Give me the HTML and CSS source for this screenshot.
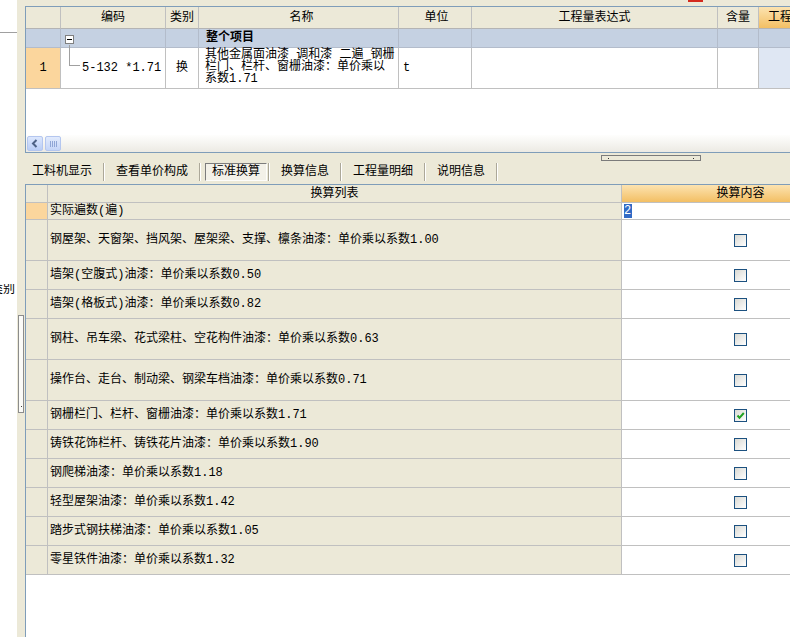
FILE: index.html
```html
<!DOCTYPE html>
<html lang="zh-CN">
<head>
<meta charset="utf-8">
<title>标准换算</title>
<link rel="stylesheet" href="styles.css">
</head>
<body>
<div class="app">
  <aside class="side">
    <div class="side-top"></div>
    <div class="side-label"><span>类别</span></div>
  </aside>
  <div class="splitter">
    <div class="vthumb"><i></i></div>
  </div>
  <main class="main">
    <div class="topstrip"><span class="redmark"></span></div>

    <section class="grid-top">
      <div class="row hdr">
        <div class="c c-num"></div>
        <div class="c c-code">编码</div>
        <div class="c c-type">类别</div>
        <div class="c c-name">名称</div>
        <div class="c c-unit">单位</div>
        <div class="c c-expr">工程量表达式</div>
        <div class="c c-qty">含量</div>
        <div class="c c-eng orange">工程量</div>
      </div>
      <div class="row group">
        <div class="c c-num"></div>
        <div class="c c-code"><span class="minus"><i></i></span></div>
        <div class="c c-type"></div>
        <div class="c c-name bold">整个项目</div>
        <div class="c c-unit"></div>
        <div class="c c-expr"></div>
        <div class="c c-qty"></div>
        <div class="c c-eng"></div>
      </div>
      <div class="row item">
        <div class="c c-num rn">1</div>
        <div class="c c-code"><span class="tree"></span><span class="code-text">5-132 *1.71</span></div>
        <div class="c c-type">换</div>
        <div class="c c-name wrap">其他金属面油漆 调和漆 二遍 钢栅<br>栏门、栏杆、窗栅油漆：单价乘以<br>系数1.71</div>
        <div class="c c-unit unit">t</div>
        <div class="c c-expr"></div>
        <div class="c c-qty"></div>
        <div class="c c-eng lightblue"></div>
      </div>
      <div class="blank"></div>
      <div class="hscroll">
        <span class="sb-btn"><svg width="14" height="13" viewBox="0 0 14 13"><path d="M8.5 3 L5 6.5 L8.5 10" fill="none" stroke="#4d6185" stroke-width="2"/></svg></span>
        <span class="sb-thumb"><i></i><i></i><i></i><i></i></span>
      </div>
    </section>

    <div class="tabarea">
      <div class="grip"><i></i><i></i></div>
      <nav class="tabbar">
        <span class="tab first">工料机显示</span><span class="sep"></span>
        <span class="tab">查看单价构成</span><span class="sep"></span>
        <span class="tab sel">标准换算</span><span class="sep"></span>
        <span class="tab">换算信息</span><span class="sep"></span>
        <span class="tab">工程量明细</span><span class="sep"></span>
        <span class="tab">说明信息</span><span class="sep"></span>
      </nav>
    </div>

    <section class="grid-bottom">
      <div class="row bhdr">
        <div class="c b-num"></div>
        <div class="c b-list">换算列表</div>
        <div class="c b-val orange">换算内容</div>
      </div>
      <div class="row r17">
        <div class="c b-num rn"></div>
        <div class="c b-list">实际遍数(遍)</div>
        <div class="c b-val left"><span class="selval">2</span></div>
      </div>
      <div class="row r41">
        <div class="c b-num"></div>
        <div class="c b-list">钢屋架、天窗架、挡风架、屋架梁、支撑、檩条油漆：单价乘以系数1.00</div>
        <div class="c b-val"><span class="cb"></span></div>
      </div>
      <div class="row r29">
        <div class="c b-num"></div>
        <div class="c b-list">墙架(空腹式)油漆：单价乘以系数0.50</div>
        <div class="c b-val"><span class="cb"></span></div>
      </div>
      <div class="row r29">
        <div class="c b-num"></div>
        <div class="c b-list">墙架(格板式)油漆：单价乘以系数0.82</div>
        <div class="c b-val"><span class="cb"></span></div>
      </div>
      <div class="row r41">
        <div class="c b-num"></div>
        <div class="c b-list">钢柱、吊车梁、花式梁柱、空花构件油漆：单价乘以系数0.63</div>
        <div class="c b-val"><span class="cb"></span></div>
      </div>
      <div class="row r41">
        <div class="c b-num"></div>
        <div class="c b-list">操作台、走台、制动梁、钢梁车档油漆：单价乘以系数0.71</div>
        <div class="c b-val"><span class="cb"></span></div>
      </div>
      <div class="row r29">
        <div class="c b-num"></div>
        <div class="c b-list">钢栅栏门、栏杆、窗栅油漆：单价乘以系数1.71</div>
        <div class="c b-val"><span class="cb"><svg width="11" height="11" viewBox="0 0 11 11"><path d="M2.5 5.5 L4.5 7.8 L8.8 3" fill="none" stroke="#21a121" stroke-width="2"/></svg></span></div>
      </div>
      <div class="row r29">
        <div class="c b-num"></div>
        <div class="c b-list">铸铁花饰栏杆、铸铁花片油漆：单价乘以系数1.90</div>
        <div class="c b-val"><span class="cb"></span></div>
      </div>
      <div class="row r29">
        <div class="c b-num"></div>
        <div class="c b-list">钢爬梯油漆：单价乘以系数1.18</div>
        <div class="c b-val"><span class="cb"></span></div>
      </div>
      <div class="row r29">
        <div class="c b-num"></div>
        <div class="c b-list">轻型屋架油漆：单价乘以系数1.42</div>
        <div class="c b-val"><span class="cb"></span></div>
      </div>
      <div class="row r29">
        <div class="c b-num"></div>
        <div class="c b-list">踏步式钢扶梯油漆：单价乘以系数1.05</div>
        <div class="c b-val"><span class="cb"></span></div>
      </div>
      <div class="row r29">
        <div class="c b-num"></div>
        <div class="c b-list">零星铁件油漆：单价乘以系数1.32</div>
        <div class="c b-val"><span class="cb"></span></div>
      </div>
    </section>
  </main>
</div>
</body>
</html>
```

FILE: styles.css
```css
* { box-sizing: border-box; margin: 0; padding: 0; }
html, body { width: 790px; height: 637px; overflow: hidden; background: #fff; }
body {
  font-family: "Liberation Mono", "Noto Sans CJK SC", monospace;
  font-size: 12px;
  line-height: 14px;
  color: #000;
}

.app { display: flex; width: 790px; height: 637px; }

/* left strip */
.side { width: 17px; flex: none; background: #fff; display: flex; flex-direction: column; }
.side-top { height: 33px; border-bottom: 1px solid #a0a0a0; }
.side-label {
  margin-top: 251px; height: 12px; line-height: 12px;
  display: flex; justify-content: flex-end; overflow: hidden;
  white-space: nowrap; padding-right: 2px;
}

.splitter { width: 8px; flex: none; background: #ece9d8; padding-top: 315px; }
.vthumb {
  width: 6px; height: 98px; margin-left: 1px;
  border: 1px solid #8c8c8c; background: #fbfbf8;
  display: flex; flex-direction: column; justify-content: flex-end; align-items: center;
  padding-bottom: 5px;
}
.vthumb i { display: block; width: 1px; height: 1px; background: #404040; }

/* main */
.main { flex: 1; min-width: 0; overflow: hidden; display: flex; flex-direction: column; background: #fff; }
.topstrip { height: 6px; flex: none; background: #ece9d8; padding-left: 663px; }
.redmark { display: block; width: 15px; height: 2px; background: #d42a1e; }

.row { display: flex; flex: none; }
.c {
  flex: none; display: flex; align-items: center; white-space: nowrap;
  border-right: 1px solid #c0c0c0; border-bottom: 1px solid #c0c0c0;
}
.orange { background: linear-gradient(#fce3b0, #f3bf64); }
.rn { background: #fbd69d; justify-content: center; }
.bold { font-weight: bold; }

/* top grid */
.grid-top {
  flex: none; height: 147px; background: #fff;
  border-top: 1px solid #7f9db9; border-left: 1px solid #7f9db9; border-bottom: 1px solid #7f9db9;
  display: flex; flex-direction: column;
}
.c-num { width: 35px; }
.c-code { width: 105px; }
.c-type { width: 33px; justify-content: center; }
.c-name { width: 200px; padding-left: 6px; }
.c-unit { width: 73px; padding-left: 3px; }
.c-expr { width: 246px; }
.c-qty { width: 41px; }
.c-eng { width: 100px; }

.hdr { height: 22px; background: #ece9d8; }
.hdr .c { justify-content: center; border-bottom-color: #b4b4b4; }
.hdr .c-eng { justify-content: flex-start; padding-left: 9px; }

.group { height: 19px; background: #c5d1e2; }
.group .c { border-color: #b3bccb; }
.group .c-name { padding-left: 7px; }
.minus {
  width: 9px; height: 9px; margin-left: 4px; margin-top: 3px;
  border: 1px solid #808080; background: #fff;
  display: flex; align-items: center; justify-content: center;
}
.minus i { display: block; width: 5px; height: 1px; background: #000; }

.item { height: 41px; }
.tree {
  align-self: flex-start; width: 11px; height: 21px; margin-top: -3px; margin-left: 8px;
  border-left: 1px solid #a0a0a0; border-bottom: 1px solid #a0a0a0;
}
.code-text { margin-left: 2px; }
.wrap { display: block; white-space: normal; line-height: 12px; padding-top: 1px; }
.unit { padding-left: 4px; }
.lightblue { background: #dfe7f3; }

.blank { flex: 1; }
.hscroll {
  height: 17px; flex: none; display: flex; align-items: center;
  background: linear-gradient(#fefefd, #eceae3);
}
.sb-btn {
  width: 16px; height: 15px; margin-left: 1px;
  border: 1px solid #b4c6ef; border-radius: 2px;
  background: linear-gradient(#dce7fd, #b9cdf6);
  display: flex; align-items: center; justify-content: center;
}
.sb-thumb {
  width: 16px; height: 15px; margin-left: 2px;
  border: 1px solid #b4c6ef; border-radius: 2px;
  background: linear-gradient(#e2ebfd, #c4d5f8);
  display: flex; align-items: center; justify-content: center; gap: 1px;
}
.sb-thumb i { display: block; width: 1px; height: 6px; background: #8fa6d6; }

/* tabs */
.tabarea { flex: none; height: 31px; background: #ece9d8; }
.grip {
  margin: 2px 0 0 576px; width: 100px; height: 6px;
  border: 1px solid #7b7b7b; background: #ece9d8;
  display: flex; align-items: center; justify-content: space-between; padding: 0 6px;
}
.grip i { display: block; width: 1px; height: 1px; background: #303030; }
.tabbar { display: flex; height: 18px; margin-top: 2px; padding-left: 7px; }
.tab { padding: 0 10px; line-height: 18px; white-space: nowrap; }
.tab.first { padding-left: 0; }
.tab.sel {
  margin-left: 3px; padding: 0 6px; line-height: 16px;
  border: 1px solid; border-color: #7c7c7c #fdfdfb #fdfdfb #7c7c7c;
  background: #f3f1e8;
}
.sep { width: 2px; margin: 0 1px; border-left: 1px solid #aca899; border-right: 1px solid #fff; }

/* bottom grid */
.grid-bottom {
  flex: 1; background: #fff;
  border-top: 1px solid #7f9db9; border-left: 1px solid #7f9db9;
  display: flex; flex-direction: column;
}
.b-num { width: 22px; background: #ece9d8; }
.b-list { width: 574px; background: #ece9d8; padding-left: 2px; }
.b-val { width: 238px; justify-content: center; }
.b-val.left { justify-content: flex-start; padding-left: 2px; }
.bhdr { height: 18px; }
.bhdr .b-list { justify-content: center; padding: 1px 0 0; }
.bhdr .b-val { padding-top: 1px; }
.r17 { height: 17px; }
.r29 { height: 29px; }
.r41 { height: 41px; }
.b-num.rn { background: #fbd69d; }

.selval { background: #316ac5; color: #fff; line-height: 14px; padding: 0 1px 0 0; }
.cb {
  width: 13px; height: 13px; border: 1px solid #1c5180;
  background: linear-gradient(135deg, #d9d9d3, #ffffff);
  display: flex; align-items: center; justify-content: center;
}
```
